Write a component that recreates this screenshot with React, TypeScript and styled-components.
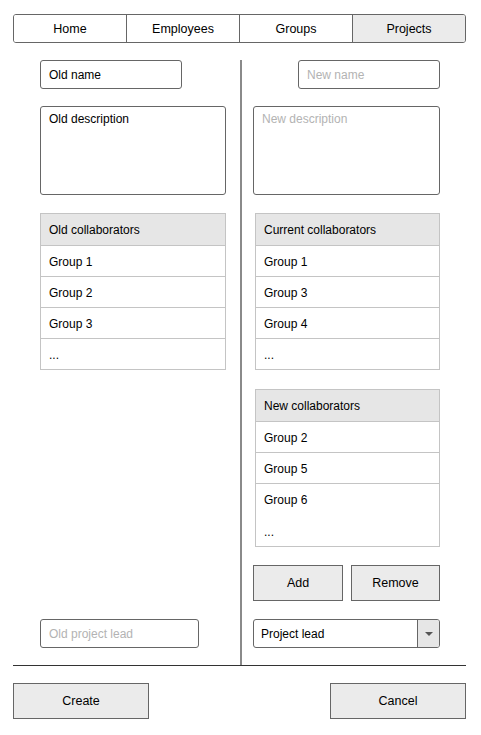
import React from 'react';
import styled, { createGlobalStyle } from 'styled-components';

const GlobalStyle = createGlobalStyle`
  * {
    box-sizing: border-box;
  }

  body {
    margin: 0;
    background: #ffffff;
    font-family: 'Liberation Sans', Arial, sans-serif;
    font-size: 12px;
    color: #000000;
  }
`;

const Page = styled.div`
  width: 481px;
  height: 735px;
  padding: 14px 15px 0 13px;
`;

const Tabs = styled.nav`
  display: flex;
  width: 453px;
  height: 29px;
  border: 1px solid #666666;
  border-radius: 3px;
  overflow: hidden;
`;

const Tab = styled.div<{ $active?: boolean }>`
  flex: 1;
  display: flex;
  align-items: center;
  justify-content: center;
  padding-top: 1px;
  background: ${(p) => (p.$active ? '#ebebeb' : '#ffffff')};
  font-size: 12.5px;

  & + & {
    border-left: 1px solid #666666;
  }
`;

const Main = styled.div`
  display: flex;
  width: 453px;
  height: 606px;
  margin-top: 17px;
  border-bottom: 1px solid #333333;
`;

const Column = styled.div<{ $right?: boolean }>`
  display: flex;
  flex-direction: column;
  width: ${(p) => (p.$right ? '226px' : '227px')};
  padding: ${(p) => (p.$right ? '0 26px 17px 11px' : '0 14px 17px 27px')};
  border-left: ${(p) => (p.$right ? '2px solid #8a8a8a' : 'none')};
`;

const Field = styled.div<{ $width: number; $muted?: boolean; $alignEnd?: boolean }>`
  width: ${(p) => p.$width}px;
  height: 29px;
  flex-shrink: 0;
  display: flex;
  align-items: center;
  padding-left: 8px;
  border: 1px solid #666666;
  border-radius: 3px;
  color: ${(p) => (p.$muted ? '#b3b3b3' : '#000000')};
  align-self: ${(p) => (p.$alignEnd ? 'flex-end' : 'flex-start')};
`;

const TextArea = styled.div<{ $muted?: boolean }>`
  align-self: stretch;
  height: 89px;
  flex-shrink: 0;
  margin-top: 17px;
  padding: 5px 8px;
  border: 1px solid #666666;
  border-radius: 3px;
  color: ${(p) => (p.$muted ? '#b3b3b3' : '#000000')};
`;

const List = styled.div<{ $gap: number; $inset?: number }>`
  flex-shrink: 0;
  margin-top: ${(p) => p.$gap}px;
  margin-left: ${(p) => p.$inset || 0}px;
  border: 1px solid #c4c4c4;
`;

const ListHeader = styled.div`
  height: 31px;
  display: flex;
  align-items: center;
  padding: 1px 0 0 8px;
  background: #e6e6e6;
`;

const ListRow = styled.div<{ $tall?: boolean }>`
  height: ${(p) => (p.$tall ? '63px' : '31px')};
  display: flex;
  flex-direction: column;
  justify-content: center;
  padding: 1px 0 0 8px;
  line-height: 32px;
  border-top: 1px solid #c4c4c4;
`;

const ButtonRow = styled.div`
  display: flex;
  gap: 8px;
  margin-top: 18px;
`;

const Button = styled.button<{ $width: number }>`
  width: ${(p) => p.$width}px;
  height: 36px;
  padding: 0;
  border: 1px solid #666666;
  background: #ebebeb;
  font-family: inherit;
  font-size: 12.5px;
  color: #000000;
`;

const Select = styled.div`
  display: flex;
  margin-top: auto;
  height: 29px;
  flex-shrink: 0;
  border: 1px solid #666666;
  border-radius: 3px;
  overflow: hidden;
`;

const SelectValue = styled.div`
  flex: 1;
  display: flex;
  align-items: center;
  padding-left: 7px;
`;

const SelectArrow = styled.div`
  width: 22px;
  display: flex;
  align-items: center;
  justify-content: center;
  background: #e6e6e6;
  border-left: 1px solid #666666;

  &::after {
    content: '';
    border-left: 4px solid transparent;
    border-right: 4px solid transparent;
    border-top: 4px solid #555555;
  }
`;

const LeadField = styled(Field)`
  margin-top: auto;
`;

const Footer = styled.div`
  display: flex;
  justify-content: space-between;
  width: 453px;
  margin-top: 17px;
`;

const App = () => {
  return (
    <Page>
      <GlobalStyle />
      <Tabs>
        <Tab>Home</Tab>
        <Tab>Employees</Tab>
        <Tab>Groups</Tab>
        <Tab $active>Projects</Tab>
      </Tabs>
      <Main>
        <Column>
          <Field $width={142}>Old name</Field>
          <TextArea>Old description</TextArea>
          <List $gap={18}>
            <ListHeader>Old collaborators</ListHeader>
            <ListRow>Group 1</ListRow>
            <ListRow>Group 2</ListRow>
            <ListRow>Group 3</ListRow>
            <ListRow>...</ListRow>
          </List>
          <LeadField $width={159} $muted>
            Old project lead
          </LeadField>
        </Column>
        <Column $right>
          <Field $width={142} $muted $alignEnd>
            New name
          </Field>
          <TextArea $muted>New description</TextArea>
          <List $gap={18} $inset={2}>
            <ListHeader>Current collaborators</ListHeader>
            <ListRow>Group 1</ListRow>
            <ListRow>Group 3</ListRow>
            <ListRow>Group 4</ListRow>
            <ListRow>...</ListRow>
          </List>
          <List $gap={19} $inset={2}>
            <ListHeader>New collaborators</ListHeader>
            <ListRow>Group 2</ListRow>
            <ListRow>Group 5</ListRow>
            <ListRow $tall>
              <span>Group 6</span>
              <span>...</span>
            </ListRow>
          </List>
          <ButtonRow>
            <Button $width={90}>Add</Button>
            <Button $width={89}>Remove</Button>
          </ButtonRow>
          <Select>
            <SelectValue>Project lead</SelectValue>
            <SelectArrow />
          </Select>
        </Column>
      </Main>
      <Footer>
        <Button $width={136}>Create</Button>
        <Button $width={136}>Cancel</Button>
      </Footer>
    </Page>
  );
};

export default App;
